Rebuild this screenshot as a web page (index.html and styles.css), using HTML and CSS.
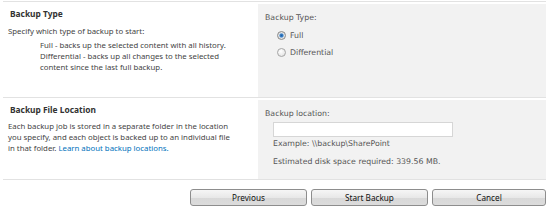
FILE: index.html
```html
<html>
<head>
<title>Perform a Backup</title>
<link rel="stylesheet" href="styles.css">
</head>
<body>

<div class="form">
    <div class="section">
        <div class="desc">
            <h3 class="title">Backup Type</h3>
            <p>Specify which type of backup to start:</p>
            <p class="indent">Full - backs up the selected content with all history.<br>
            Differential - backs up all changes to the selected<br>
            content since the last full backup.</p>
        </div>
        <div class="controls">
            <div class="label">Backup Type:</div>
            <label class="radio"><input type="radio" name="type" checked> Full</label>
            <label class="radio"><input type="radio" name="type"> Differential</label>
        </div>
    </div>

    <div class="section second">
        <div class="desc">
            <h3 class="title">Backup File Location</h3>
            <p class="wide">Each backup job is stored in a separate folder in the location<br>
            you specify, and each object is backed up to an individual file<br>
            in that folder. <a href="#">Learn about backup locations.</a></p>
        </div>
        <div class="controls">
            <div class="label">Backup location:</div>
            <div class="field">
                <input type="text" class="location">
                <div class="hint">Example: \\backup\SharePoint</div>
                <div class="hint space">Estimated disk space required: 339.56 MB.</div>
            </div>
        </div>
    </div>

    <div class="actions">
        <button>Previous</button>
        <button>Start Backup</button>
        <button class="cancel">Cancel</button>
    </div>
</div>

</body>
</html>
```

FILE: styles.css
```css
body {
    margin: 0;
    background-color: #fff;
    font-family: "Noto Sans", "Open Sans", sans-serif;
    color: #444;
}

.form {
    margin: 1px 4px 0 3px;
}

.section {
    display: flex;
    border-top: 1px solid #e2e2e2;
    height: 95px;
}

.section.second {
    height: 81px;
    border-bottom: 1px solid #e2e2e2;
}

.desc {
    width: 245px;
    padding: 0 5px 0 5px;
    font-size: 7.8px;
    line-height: 10.7px;
}

.title {
    margin: 7px 0 0 2px;
    font-size: 8.4px;
    font-weight: bold;
    color: #333;
}

.desc p {
    margin: 6px 0 0 0;
}

.desc p.indent {
    margin: 4px 0 0 32px;
    width: 200px;
}

.desc p.wide {
    width: 240px;
    line-height: 11px;
    margin-top: 5px;
}

.desc a {
    color: #0072bc;
    text-decoration: none;
}

.controls {
    flex: 1;
    margin-top: 2px;
    background-color: #f2f2f2;
    padding: 8px 0 0 7px;
    font-family: "DejaVu Sans", Verdana, sans-serif;
    font-size: 7.8px;
    color: #555;
}

.label {
    line-height: 12px;
}

.radio {
    display: flex;
    align-items: center;
    margin: 5px 0 0 12px;
    height: 12px;
}

.radio input {
    appearance: none;
    width: 9px;
    height: 9px;
    margin: 0 4px 0 0;
    border: 1px solid #a5a5a5;
    border-radius: 50%;
    background: radial-gradient(circle at 40% 35%, #fff, #dcdcdc);
}

.radio input:checked {
    border-color: #8a8a8a;
    background: radial-gradient(circle, #1e5fa8 0, #3d84c9 1.6px, #e9e9e9 2.6px, #cfcfcf);
}

.field {
    margin: 2px 0 0 8px;
}

.location {
    display: block;
    width: 180px;
    height: 15px;
    border: 1px solid #d6d6d6;
    background-color: #fff;
    padding: 0;
}

.hint {
    margin-top: 2px;
    line-height: 10px;
}

.hint.space {
    margin-top: 8px;
}

.actions {
    display: flex;
    justify-content: flex-end;
    gap: 4px;
    margin-top: 9px;
}

button {
    width: 117px;
    height: 17px;
    padding: 0;
    font-family: "Noto Sans", "Open Sans", sans-serif;
    font-size: 8.2px;
    color: #111;
    border: 1px solid #8d8d8d;
    border-radius: 3px;
    background: linear-gradient(#f6f6f6, #e8e8e8 50%, #d8d8d8 51%, #dcdcdc);
}

button.cancel {
    width: 114px;
}
```
